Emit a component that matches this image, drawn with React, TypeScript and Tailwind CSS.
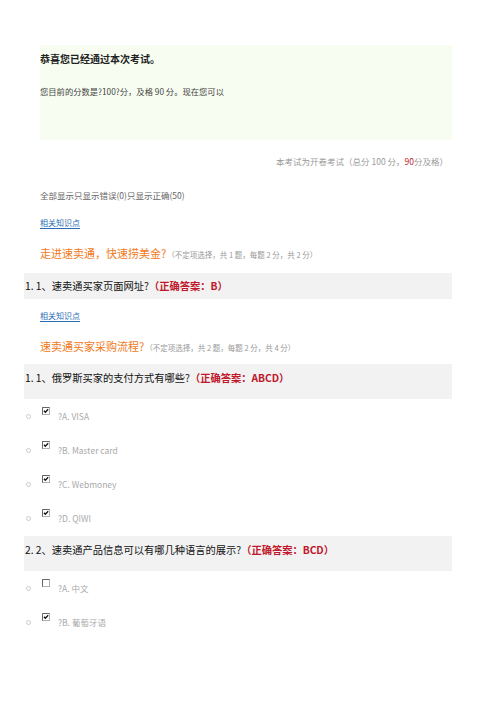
const FONT = { fontFamily: '"Noto Sans CJK SC", "Noto Sans", sans-serif' }

function Check({ checked }: { checked: boolean }) {
  return (
    <svg width="8" height="8" viewBox="0 0 8 8" className="block">
      <rect x="0.5" y="0.5" width="7" height="7" fill="#fff" stroke="#b0b0b0" />
      <path d="M0.5 7.5V0.5H7.5" fill="none" stroke="#666" />
      {checked && <path d="M2 3.8L3.3 5.3L6.2 2.2" fill="none" stroke="#111" strokeWidth="1.3" />}
    </svg>
  )
}

function Option({ label, checked }: { label: string; checked: boolean }) {
  return (
    <div className="flex h-[34px] items-start">
      <span className="mt-[15px] w-[5px] h-[5px] ml-[2px] rounded-full border border-[#cccccc]" />
      <span className="ml-[11px] mt-[8px]"><Check checked={checked} /></span>
      <span className="ml-[8px] mt-[9px] text-[8.5px] leading-[16px] text-[#aaaaaa]">{label}</span>
    </div>
  )
}

function Link() {
  return (
    <div className="pl-4 h-[30px] flex items-center">
      <span className="text-[8px] leading-[11px] text-[#2a6db5] border-b border-[#2a6db5]">相关知识点</span>
    </div>
  )
}

function Section({ title, note }: { title: string; note: string }) {
  return (
    <div className="pl-4 h-[30px] flex items-center">
      <span className="text-[11px] text-[#f07a1a]">{title}</span>
      <span className="text-[7.5px] text-[#999] ml-[1px] mt-[3px]">{note}</span>
    </div>
  )
}

function Bar({ text, answer, tall }: { text: string; answer: string; tall?: boolean }) {
  return (
    <div className={`bg-[#f2f2f2] flex ${tall ? 'h-[35px] items-start pt-[7px]' : 'h-[26px] items-center'}`}>
      <span className="text-[10.25px] leading-[14px] text-[#111] pl-[1px]">
        {text}
        <span className="text-[#c0172a] font-bold">（正确答案：{answer}）</span>
      </span>
    </div>
  )
}

export default function App() {
  return (
    <div className="w-[496px] h-[702px] bg-white" style={FONT}>
      <div className="pt-[45px] ml-[24px] w-[428px]">
        <div className="ml-4 bg-[#f7fdf0] h-[95px] pt-[6px]">
          <div className="text-[10px] leading-[15px] font-bold text-[#222]">恭喜您已经通过本次考试。</div>
          <div className="mt-[19px] text-[8.3px] leading-[12px] text-[#444]">您目前的分数是?100?分，及格 90 分。现在您可以</div>
        </div>
        <div className="h-[42px] flex items-center justify-end pr-[4px] text-[8.5px] text-[#999]">
          本考试为开卷考试（总分 100 分，<span className="text-[#c0172a]">90</span> 分及格）
        </div>
        <div className="pl-4 h-[26px] flex items-center text-[8.5px] text-[#666]">全部显示只显示错误(0)只显示正确(50)</div>
        <Link />
        <Section title="走进速卖通，快速捞美金?" note="（不定项选择，共 1 题，每题 2 分，共 2 分）" />
        <div className="h-[5px]" />
        <Bar text="1. 1、速卖通买家页面网址?" answer="B" />
        <div className="h-[2px]" />
        <Link />
        <Section title="速卖通买家采购流程?" note="（不定项选择，共 2 题，每题 2 分，共 4 分）" />
        <div className="h-[3px]" />
        <Bar text="1. 1、俄罗斯买家的支付方式有哪些?" answer="ABCD" tall />
        <Option label="?A. VISA" checked />
        <Option label="?B. Master card" checked />
        <Option label="?C. Webmoney" checked />
        <Option label="?D. QIWI" checked />
        <div className="h-[1px]" />
        <Bar text="2. 2、速卖通产品信息可以有哪几种语言的展示?" answer="BCD" tall />
        <Option label="?A. 中文" checked={false} />
        <Option label="?B. 葡萄牙语" checked />
      </div>
    </div>
  )
}
